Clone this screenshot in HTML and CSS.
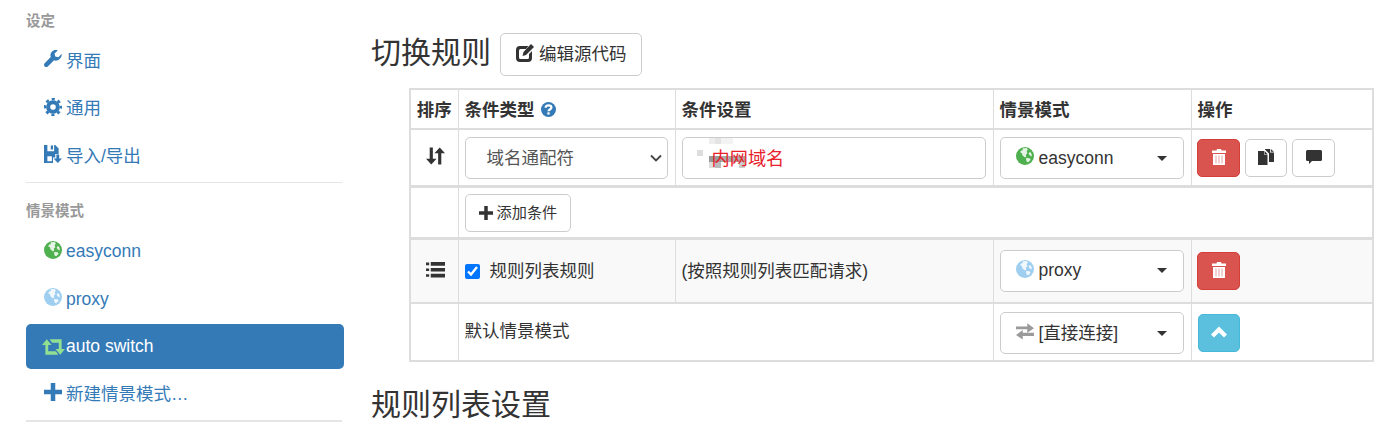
FILE: index.html
```html
<!DOCTYPE html>
<html lang="zh">
<head>
<meta charset="utf-8">
<title>切换规则</title>
<link rel="stylesheet" href="styles.css">
</head>
<body>
<svg class="defs" width="0" height="0" aria-hidden="true">
  <symbol id="i-wrench" viewBox="0 0 16 16"><path d="M15.6 3.6 12.8 6.4 10 5.8 9.4 3 12.2.4C10.2-.3 8.2.2 7 1.5 5.7 2.9 5.4 4.7 6 6.3L.6 11.8c-.8.8-.8 2 0 2.8.8.8 2 .8 2.8 0L8.9 9.200c1.700.6 3.600.2 5-1.100 1.400-1.300 2.200-3 1.700-4.500z"/></symbol>
  <symbol id="i-cog" viewBox="0 0 16 16"><circle cx="8" cy="8" r="4.300" fill="none" stroke="currentColor" stroke-width="3.600"/><circle cx="8" cy="8" r="7" fill="none" stroke="currentColor" stroke-width="2.200" stroke-dasharray="2.750 2.750" stroke-dashoffset="1.375"/></symbol>
  <symbol id="i-save" viewBox="0 0 16 16"><path d="M0 0h3v5.500h6V0h1l3 3v5h-3v3H8v5H0zM6 .5h2v3.500H6zM3 10v4.500h4V10z"/><path d="M11 8.500h2.500V12H16l-3.700 4-3.800-4H11z"/></symbol>
  <symbol id="i-globe" viewBox="0 0 16 16"><circle cx="8" cy="8" r="8"/><path fill="#fff" fill-opacity=".85" d="M6 1.200 9.500.9l1 1.400-1 1.500.6 1.800-1.400 1.200.4 1.600-1.100 1-2.300-2-.4-1.800-1.600-.9.900-1.700L6 2.900zM12.400 4.200l1.400 1.800.3 2.500-1.700-1-1.200-1.400zM9 9.800l3.100.2.900 1.300-2.100 2.200-1.300-.5-.6-1.700z"/></symbol>
  <symbol id="i-retweet" viewBox="0 0 24 16"><path d="M5 0 10 6H6.500V12.500H14.500L17 16H3.500V6H0zM8 0H20.500V10H24L19 16 14 10H17.500V3.500H10.500z"/></symbol>
  <symbol id="i-plus" viewBox="0 0 16 16"><path d="M6 0h4v6h6v4h-6v6H6v-6H0V6h6z"/></symbol>
  <symbol id="i-edit" viewBox="0 0 18 18"><path d="M4 2h8.500L10 5H4.500a1.500 1.500 0 0 0-1.500 1.500v7A1.500 1.500 0 0 0 4.500 15h7a1.500 1.500 0 0 0 1.500-1.500V10l3-3v7a4 4 0 0 1-4 4H4a4 4 0 0 1-4-4V6a4 4 0 0 1 4-4z"/><path d="M15 0 18 3 10 11 6.500 12 7.500 8z"/></symbol>
  <symbol id="i-help" viewBox="0 0 16 16"><circle cx="8" cy="8" r="8"/><path fill="none" stroke="#fff" stroke-width="2.400" d="M4.900 6.200c0-1.800 1.400-2.700 3.100-2.700s3.100.9 3.100 2.400c0 2.100-3.100 2-3.100 4"/><rect x="6.800" y="11" width="2.400" height="2.400" fill="#fff"/></symbol>
  <symbol id="i-sort" viewBox="0 0 18 16"><path d="M3.500 0h3v10.500H10L5 16 0 10.500h3.500zM11.500 16h3V5.500H18L13 0 8 5.500h3.500z"/></symbol>
  <symbol id="i-list" viewBox="0 0 18 15"><path d="M0 .5h3V3H0zM4.500 0H18v3.500H4.500zM0 6h3v2.500H0zM4.500 5.500H18V9H4.500zM0 11.500h3V14H0zM4.500 11H18v3.500H4.500z"/></symbol>
  <symbol id="i-trash" viewBox="0 0 16 16"><path d="M6 0h4l.5 1.500H15V4H1V1.500h4.500z"/><path d="M2 5h12v11H2z"/><path fill="#e8a3a1" d="M4.500 6.500h1v8h-1zM7.500 6.500h1v8h-1zM10.500 6.500h1v8h-1z"/></symbol>
  <symbol id="i-copy" viewBox="0 0 16 16"><path d="M0 2h6v3.500H9.500V16H0z"/><path d="M6.500 2 9.500 5H6.500zM7 0h5v3.500h4V13h-5V4.500L7 .5z"/><path d="M12.800 0 16 2.800h-3.200z"/></symbol>
  <symbol id="i-comment" viewBox="0 0 16 16"><path d="M1.500 1h13A1.500 1.500 0 0 1 16 2.500v8a1.500 1.500 0 0 1-1.500 1.500H6l-3 3v-3H1.500A1.500 1.500 0 0 1 0 10.500v-8A1.500 1.500 0 0 1 1.500 1z"/></symbol>
  <symbol id="i-transfer" viewBox="0 0 16 16"><path d="M0 4h10V1l6 4.500-6 4V6.500H0zM16 9.500H6V7L0 11.500l6 4V12.500h10z"/></symbol>
  <symbol id="i-up" viewBox="0 0 16 16"><path d="M8 2.500 16 10.500 13 13.500 8 8.500 3 13.500 0 10.500z"/></symbol>
</svg>

<div class="page">
  <nav class="sidebar">
    <div class="nav-head">设定</div>
    <ul class="nav">
      <li><a class="nav-link"><svg class="ico"><use href="#i-wrench"/></svg>界面</a></li>
      <li><a class="nav-link"><svg class="ico"><use href="#i-cog"/></svg>通用</a></li>
      <li><a class="nav-link"><svg class="ico"><use href="#i-save"/></svg>导入/导出</a></li>
    </ul>
    <div class="nav-rule"></div>
    <div class="nav-head nav-head-second">情景模式</div>
    <ul class="nav">
      <li><a class="nav-link"><svg class="ico ico-green"><use href="#i-globe"/></svg>easyconn</a></li>
      <li><a class="nav-link"><svg class="ico ico-sky"><use href="#i-globe"/></svg>proxy</a></li>
      <li><a class="nav-link active"><svg class="ico-wide"><use href="#i-retweet"/></svg>auto switch</a></li>
      <li><a class="nav-link"><svg class="ico"><use href="#i-plus"/></svg>新建情景模式…</a></li>
    </ul>
    <div class="nav-rule nav-rule-last"></div>
  </nav>

  <main class="main">
    <div class="title-row">
      <h3 class="title">切换规则</h3>
      <button class="btn btn-edit" type="button"><svg class="ico-btn"><use href="#i-edit"/></svg>编辑源代码</button>
    </div>

    <table class="rules">
      <colgroup>
        <col class="c1"><col class="c2"><col class="c3"><col class="c4"><col class="c5">
      </colgroup>
      <thead>
        <tr class="r-head">
          <th class="center">排序</th>
          <th>条件类型 <svg class="ico-help"><use href="#i-help"/></svg></th>
          <th>条件设置</th>
          <th>情景模式</th>
          <th>操作</th>
        </tr>
      </thead>
      <tbody class="group">
        <tr class="r-cond">
          <td class="center"><svg class="ico-row ico-row-sort"><use href="#i-sort"/></svg></td>
          <td>
            <select class="field select"><option>域名通配符</option></select>
          </td>
          <td>
            <div class="mask-wrap">
              <svg class="mosaic" width="60" height="36" viewBox="0 0 60 36" aria-hidden="true">
                <rect x="18" y="0" width="6" height="6" fill="#eee"/><rect x="24" y="0" width="6" height="6" fill="#e4e4e4"/><rect x="30" y="0" width="12" height="6" fill="#f3f3f3"/>
                <rect x="6" y="12" width="6" height="6" fill="#ddd"/>
                <rect x="18" y="18" width="12" height="6" fill="#999"/><rect x="30" y="18" width="24" height="6" fill="#aaa"/>
                <rect x="18" y="24" width="6" height="6" fill="#ddd"/><rect x="24" y="24" width="6" height="6" fill="#bbb"/><rect x="48" y="24" width="6" height="6" fill="#ccc"/>
              </svg>
              <input class="field input" type="text" value="内网域名">
            </div>
          </td>
          <td><button class="field drop" type="button"><svg class="ico ico-green"><use href="#i-globe"/></svg><span class="drop-text">easyconn</span><span class="caret"></span></button></td>
          <td class="cell-actions">
            <div class="actions">
              <button class="btn-i danger" type="button"><svg><use href="#i-trash"/></svg></button>
              <button class="btn-i btn-narrow" type="button"><svg><use href="#i-copy"/></svg></button>
              <button class="btn-i" type="button"><svg><use href="#i-comment"/></svg></button>
            </div>
          </td>
        </tr>
      </tbody>
      <tbody class="group">
        <tr class="r-add">
          <td></td>
          <td colspan="4"><button class="btn btn-sm" type="button"><svg class="ico-sm"><use href="#i-plus"/></svg>添加条件</button></td>
        </tr>
      </tbody>
      <tbody>
        <tr class="r-list">
          <td class="center"><svg class="ico-row ico-row-list"><use href="#i-list"/></svg></td>
          <td class="low"><label class="check"><input type="checkbox" checked>规则列表规则</label></td>
          <td class="low">(按照规则列表匹配请求)</td>
          <td><button class="field drop" type="button"><svg class="ico ico-sky"><use href="#i-globe"/></svg><span class="drop-text">proxy</span><span class="caret"></span></button></td>
          <td class="cell-actions"><button class="btn-i danger" type="button"><svg><use href="#i-trash"/></svg></button></td>
        </tr>
        <tr class="r-default">
          <td></td>
          <td colspan="2" class="plain">默认情景模式</td>
          <td><button class="field drop" type="button"><svg class="ico ico-grey"><use href="#i-transfer"/></svg><span class="drop-text">[直接连接]</span><span class="caret"></span></button></td>
          <td class="cell-actions"><button class="btn-i btn-narrow info" type="button"><svg><use href="#i-up"/></svg></button></td>
        </tr>
      </tbody>
    </table>

    <h3 class="title title-second">规则列表设置</h3>
  </main>
</div>
</body>
</html>
```
FILE: styles.css
```css
* { box-sizing: border-box; }
html, body { margin: 0; height: 429px; overflow: hidden; background: #fff; }
body {
  font-family: "Liberation Sans", "Noto Sans CJK SC", sans-serif;
  font-size: 17.5px;
  line-height: 25px;
  color: #333;
}
.defs { position: absolute; }
.page { display: flex; align-items: flex-start; }

.sidebar { width: 318px; margin-left: 26px; flex: none; }
.nav-head { font-size: 14.5px; font-weight: 700; color: #999; line-height: 20px; height: 20px; margin-top: 11px; margin-bottom: 7.5px; }
.nav-head-second { margin-top: 18px; margin-bottom: 8px; }
.nav { list-style: none; margin: 0; padding: 0; display: flex; flex-direction: column; gap: 2.5px; }
.nav-link { display: flex; align-items: center; height: 45px; padding-left: 18px; color: #337ab7; border-radius: 5px; }
.nav-link.active { background: #337ab7; color: #fff; padding-left: 16px; }
.nav-rule { height: 1px; width: 316px; background: #e5e5e5; margin-top: 3.500px; }
.nav-rule-last { height: 2px; margin-top: 3px; }

.ico { width: 18px; height: 18px; margin-right: 4px; fill: currentColor; flex: none; position: relative; top: -2px; }
.ico-wide { width: 23px; height: 16px; margin-right: 1px; fill: #92de92; flex: none; }
.ico-green { fill: #4fb04f; color: #4fb04f; }
.ico-sky { fill: #9fcff0; color: #9fcff0; }
.ico-grey { fill: #9a9a9a; color: #9a9a9a; }

.main { margin-left: 27px; flex: 1; min-width: 0; padding-top: 33px; }
.title-row { display: flex; align-items: center; gap: 9px; height: 43px; }
.title { margin: 0 0 4px; font-size: 30px; font-weight: 400; line-height: 38px; color: #333; }
.title-second { margin-top: 24px; }

.btn {
  font: inherit;
  color: #333;
  background: #fff;
  border: 1px solid #ccc;
  border-radius: 5px;
  display: inline-flex;
  align-items: center;
}
.btn-edit { height: 43px; padding: 0 14px 0 15px; }
.ico-btn { width: 18px; height: 18px; margin-right: 5px; fill: #333; position: relative; top: -2px; }
.btn-sm { font-size: 15.2px; height: 38px; padding: 0 13px 0 13px; line-height: 20px; }
.ico-sm { width: 14px; height: 14px; margin-right: 4px; fill: #333; }

.rules {
  margin-top: 12px;
  margin-left: 38px;
  width: 963px;
  table-layout: fixed;
  border-collapse: collapse;
  border: 2px solid #ddd;
}
.c1 { width: 48px; }
.c2 { width: 217px; }
.c3 { width: 318px; }
.c4 { width: 198px; }
.c5 { width: 182px; }
.rules th, .rules td { border: 1px solid #ddd; padding: 0 6px; text-align: left; vertical-align: middle; }
.rules th { font-weight: 700; border-bottom-width: 2px; padding-top: 2px; }
.rules th.center { text-align: center; padding: 2px 0 0 0; }
.rules td.center { text-align: center; padding: 0 0 0 2px; }
.rules td.cell-actions { padding-left: 5.5px; }
.group { border-bottom: 3px solid #ddd; }
.r-head { height: 40px; }
.r-cond { height: 57px; }
.r-cond td { padding-top: 2px; }
.r-add { height: 52px; }
.r-add td { padding-top: 2px; }
.r-list { height: 65px; background: #f9f9f9; }
.r-list td { border-bottom-width: 2px; }
.r-list td.low { padding-top: 2px; }
.r-default { height: 58px; }
.r-default td { padding-top: 2px; }
.r-default td.plain { padding-top: 0; padding-bottom: 2px; }

.ico-help { width: 15px; height: 15px; margin-left: 2px; fill: #337ab7; vertical-align: -1px; }
.ico-row { width: 19px; height: 17px; fill: #333; vertical-align: -2px; }
.ico-row-sort { height: 18px; }
.ico-row-list { height: 16px; }

.field {
  font: inherit;
  color: #333;
  height: 42px;
  background: #fff;
  border: 1px solid #ccc;
  border-radius: 5px;
  width: 100%;
}
.select {
  color: #555;
  padding-left: 21px;
  display: block;
  width: 203px;
  appearance: none;
  background-image: url("data:image/svg+xml,%3Csvg xmlns='http://www.w3.org/2000/svg' width='12' height='8' viewBox='0 0 12 8'%3E%3Cpath d='M1 1.500 6 6.500 11 1.500' fill='none' stroke='%23444' stroke-width='1.800'/%3E%3C/svg%3E");
  background-repeat: no-repeat;
  background-position: right 5px center;
}
.mask-wrap { position: relative; height: 42px; margin-right: 1px; background: #fff; border-radius: 5px; }
.mosaic { position: absolute; left: 9px; top: 1px; }
.input { position: relative; display: block; background: transparent; color: #e8202a; padding: 0 29px 3px; font-size: 18.2px; }
.drop { display: flex; align-items: center; padding: 0 16px 0 15px; text-align: left; width: 184px; }
.drop .ico { margin-right: 5px; }
.drop-text { flex: 1; }
.caret { width: 0; height: 0; border-top: 5px solid #333; border-left: 5px solid transparent; border-right: 5px solid transparent; }

.actions { display: flex; gap: 5px; }
.btn-i {
  width: 43px;
  height: 38px;
  padding: 0;
  background: #fff;
  border: 1px solid #ccc;
  border-radius: 5px;
  display: inline-flex;
  align-items: center;
  justify-content: center;
  vertical-align: middle;
}
.btn-narrow { width: 42px; }
.btn-i svg { width: 16px; height: 16px; fill: #333; position: relative; top: -1px; }
.danger { background: #d9534f; border-color: #d43f3a; }
.danger svg { fill: #fff; }
.info { background: #5bc0de; border-color: #46b8da; margin-left: 1px; }
.info svg { fill: #fff; }

.check { display: flex; align-items: center; gap: 10px; }
.check input { width: 15px; height: 15px; margin: 0; accent-color: #0075ff; }
```
